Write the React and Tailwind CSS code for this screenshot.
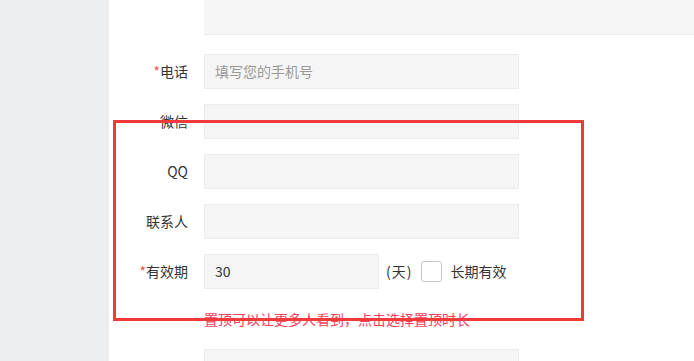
import React from "react";

const Field = ({ label, required, placeholder, value }) => (
  <div className="flex items-center h-[35px] mb-[15px]">
    <label className="w-[79px] shrink-0 text-right text-[14px] text-[#333]">
      {required && <span className="text-[#f5553f]">*</span>}
      {label}
    </label>
    <div className="ml-[16px] w-[315px] h-[35px] bg-[#f5f5f5] border border-[#ececec] flex items-center px-[10px] text-[14px]">
      {value ? (
        <span className="text-[#333]">{value}</span>
      ) : (
        <span className="text-[#999]">{placeholder}</span>
      )}
    </div>
  </div>
);

const App = () => {
  return (
    <div
      className="relative w-[694px] h-[361px] overflow-hidden flex bg-white"
      style={{ fontFamily: '"Noto Sans CJK SC", "Noto Sans", sans-serif' }}
    >
      {/* ------------- Sidebar --------------- */}
      <div className="w-[109px] shrink-0 bg-[#edeef0]" />

      {/* ------------- Form --------------- */}
      <div className="flex-1 block">
        <div className="flex h-[35px] mb-[19px]">
          <div className="w-[95px] shrink-0" />
          <div className="flex-1 bg-[#f5f5f5] border-b border-[#ececec]" />
        </div>

        <Field label="电话" required placeholder="填写您的手机号" />
        <Field label="微信" />
        <Field label="QQ" />
        <Field label="联系人" />

        <div className="flex items-center h-[35px]">
          <label className="w-[79px] shrink-0 text-right text-[14px] text-[#333]">
            <span className="text-[#f5553f]">*</span>有效期
          </label>
          <div className="ml-[16px] w-[175px] h-[35px] bg-[#f5f5f5] border border-[#ececec] flex items-center px-[10px] text-[14px] text-[#333]">
            30
          </div>
          <span className="ml-[7px] text-[14px] text-[#333] tracking-[1px]">(天)</span>
          <span className="ml-[9px] w-[21px] h-[21px] rounded-[3px] border border-[#c4c4c4] bg-white" />
          <span className="ml-[8px] text-[14px] text-[#333]">长期有效</span>
        </div>

        <p className="ml-[95px] mt-[20px] text-[14px] leading-[20px] text-[#f2415c]">
          置顶可以让更多人看到，点击选择置顶时长
        </p>

        <div className="flex mt-[20px]">
          <div className="ml-[95px] w-[315px] h-[35px] bg-[#f5f5f5] border border-[#ececec]" />
        </div>
      </div>

      {/* ------------- Annotation box --------------- */}
      <div className="absolute left-[113px] top-[120px] w-[471px] h-[201px] border-[3px] border-[#f23a3a] pointer-events-none" />
    </div>
  );
};

export default App;
